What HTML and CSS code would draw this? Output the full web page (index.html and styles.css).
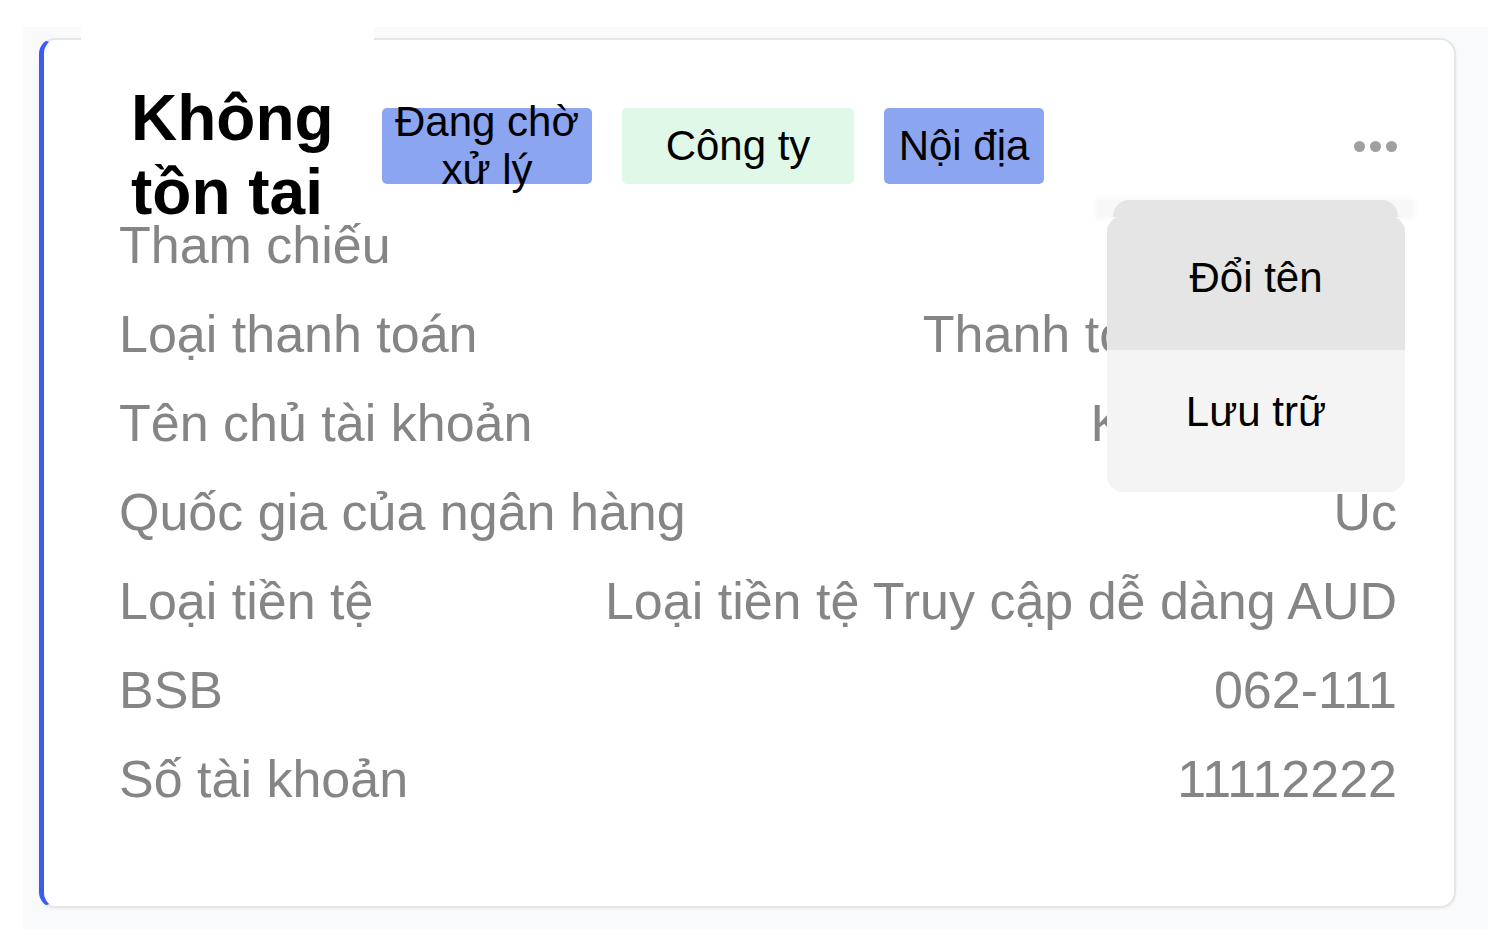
FILE: index.html
```html
<!DOCTYPE html>
<html lang="vi">
<head>
    <meta charset="UTF-8">
    <meta name="viewport" content="width=device-width, initial-scale=1.0">
    <title>Tài khoản ngân hàng</title>
    <link rel="stylesheet" href="styles.css">
</head>
<body>
    <div class="page">
        <div class="account-card">
            <div class="card-header">
                <div class="title-block">
                    <h1>Không tồn tai</h1>
                </div>
                <span class="badge badge-pending">Đang chờ xử lý</span>
                <span class="badge badge-company">Công ty</span>
                <span class="badge badge-domestic">Nội địa</span>
                <button class="more-btn" aria-label="Thêm">
                    <span class="dot"></span>
                    <span class="dot"></span>
                    <span class="dot"></span>
                </button>
            </div>

            <div class="details">
                <div class="detail-row">
                    <span class="label">Tham chiếu</span>
                    <span class="value">Không có</span>
                </div>
                <div class="detail-row">
                    <span class="label">Loại thanh toán</span>
                    <span class="value">Thanh toán quốc nội</span>
                </div>
                <div class="detail-row">
                    <span class="label">Tên chủ tài khoản</span>
                    <span class="value">Không tồn tai</span>
                </div>
                <div class="detail-row">
                    <span class="label">Quốc gia của ngân hàng</span>
                    <span class="value">Úc</span>
                </div>
                <div class="detail-row">
                    <span class="label">Loại tiền tệ</span>
                    <span class="value">Loại tiền tệ Truy cập dễ dàng AUD</span>
                </div>
                <div class="detail-row">
                    <span class="label">BSB</span>
                    <span class="value">062-111</span>
                </div>
                <div class="detail-row">
                    <span class="label">Số tài khoản</span>
                    <span class="value">11112222</span>
                </div>
            </div>

            <!-- open actions menu -->
            <div class="action-menu">
                <div class="menu-item active">Đổi tên</div>
                <div class="menu-item">Lưu trữ</div>
            </div>
        </div>
    </div>
</body>
</html>
```

FILE: styles.css
```css
* {
    margin: 0;
    padding: 0;
    box-sizing: border-box;
}

body {
    font-family: 'Liberation Sans', Arial, sans-serif;
    background-color: #fff;
}

.page {
    margin: 27px 8px 10px 23px;
    height: 903px;
    padding: 11px 32px 22px 16px;
    background-color: #f9fafb;
}

.account-card {
    position: relative;
    height: 870px;
    padding: 0 57px 0 37px;
    background-color: #fff;
    border: 2px solid #e6e6e6;
    border-left: 5px solid #3b5cf0;
    border-radius: 16px;
    box-shadow: 0 1px 3px rgba(0, 0, 0, 0.06);
}

.card-header {
    display: flex;
    align-items: flex-start;
    height: 175px;
}

.title-block {
    flex-shrink: 0;
    width: 293px;
    margin-top: -13px;
    padding: 54px 0 0 50px;
    background-color: #fff;
}

.title-block h1 {
    font-size: 64px;
    font-weight: 700;
    line-height: normal;
    color: #000;
}

.badge {
    flex-shrink: 0;
    display: flex;
    align-items: center;
    justify-content: center;
    height: 76px;
    margin-top: 68px;
    margin-left: 30px;
    padding: 0 10px;
    border-radius: 5px;
    font-size: 42px;
    line-height: normal;
    text-align: center;
    color: #000;
}

.badge-pending {
    width: 210px;
    margin-left: 8px;
    background-color: #8ba5f1;
}

.badge-company {
    width: 232px;
    background-color: #e0f8e7;
}

.badge-domestic {
    width: 160px;
    background-color: #8ba5f1;
}

.more-btn {
    display: flex;
    gap: 5px;
    margin-left: auto;
    margin-top: 101px;
    padding: 0;
    border: none;
    background: none;
    cursor: pointer;
}

.more-btn .dot {
    width: 11px;
    height: 11px;
    border-radius: 50%;
    background-color: #a0a0a0;
    filter: blur(0.7px);
}

.details {
    display: flex;
    flex-direction: column;
    gap: 29px;
    padding-left: 38px;
}

.detail-row {
    display: flex;
    justify-content: space-between;
    font-size: 52px;
    line-height: normal;
    color: #858585;
}

.action-menu {
    position: absolute;
    top: 176px;
    right: 49px;
    width: 298px;
    z-index: 2;
}

.action-menu::before {
    content: '';
    position: absolute;
    top: -16px;
    left: -10px;
    right: -8px;
    height: 17px;
    background-color: #f8f8f8;
    box-shadow: 0 0 6px 2px #f8f8f8;
}

.action-menu::after {
    content: '';
    position: absolute;
    top: -16px;
    left: 6px;
    right: 7px;
    height: 17px;
    background-color: #e5e5e5;
    border-radius: 16px 16px 0 0;
}

.menu-item {
    position: relative;
    z-index: 1;
    height: 142px;
    padding-top: 38px;
    font-size: 42px;
    line-height: normal;
    text-align: center;
    color: #000;
    background-color: #f4f4f4;
}

.menu-item:first-child {
    border-radius: 16px 16px 0 0;
}

.menu-item:last-child {
    border-radius: 0 0 16px 16px;
}

.menu-item.active {
    height: 134px;
    background-color: #e5e5e5;
}
```
